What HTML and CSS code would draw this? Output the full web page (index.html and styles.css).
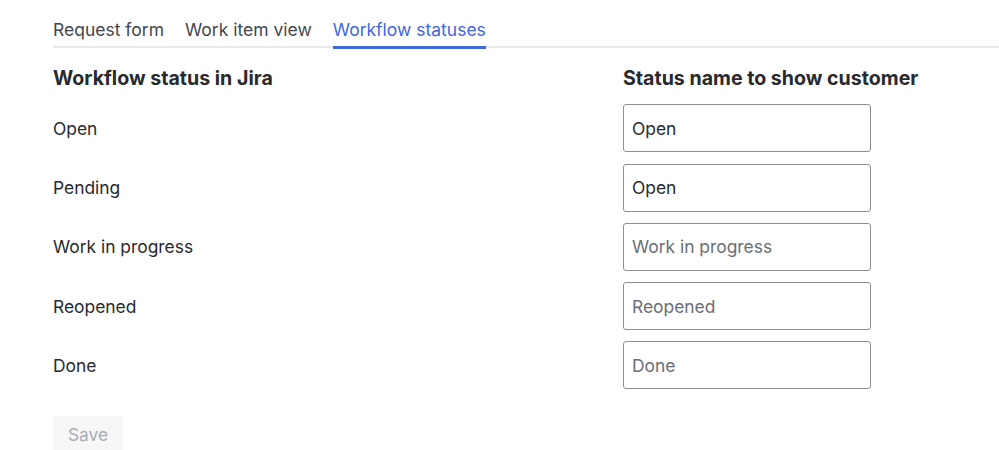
FILE: index.html
```html
<!DOCTYPE html>
<html>
<head>
<meta charset="utf-8">
<link rel="stylesheet" href="styles.css">
</head>
<body>
<div class="page">
  <nav class="tabs">
    <div class="tab">Request form</div>
    <div class="tab">Work item view</div>
    <div class="tab active">Workflow statuses</div>
  </nav>
  <div class="table">
    <div class="row head">
      <div class="col-left">Workflow status in Jira</div>
      <div class="col-right">Status name to show customer</div>
    </div>
    <div class="row">
      <div class="col-left">Open</div>
      <div class="col-right"><input class="field" value="Open"></div>
    </div>
    <div class="row">
      <div class="col-left">Pending</div>
      <div class="col-right"><input class="field" value="Open"></div>
    </div>
    <div class="row">
      <div class="col-left">Work in progress</div>
      <div class="col-right"><input class="field" placeholder="Work in progress"></div>
    </div>
    <div class="row">
      <div class="col-left">Reopened</div>
      <div class="col-right"><input class="field" placeholder="Reopened"></div>
    </div>
    <div class="row">
      <div class="col-left">Done</div>
      <div class="col-right"><input class="field" placeholder="Done"></div>
    </div>
  </div>
  <button class="save" disabled>Save</button>
</div>
</body>
</html>
```
FILE: styles.css
```css
* { box-sizing: border-box; }
html, body { margin: 0; padding: 0; background: #fff; overflow: hidden; }
body {
  font-family: Inter, "Noto Sans", sans-serif;
  color: #292a2e;
  font-size: 17.4px;
}
.page {
  padding: 16px 0 0 53px;
}
.tabs {
  display: flex;
  gap: 21px;
  border-bottom: 2px solid #e9e9eb;
  height: 32px;
}
.tab {
  font-size: 17.5px;
  line-height: 28px;
  color: #44464d;
  height: 32px;
}
.tab.active {
  color: #3f66dd;
  border-bottom: 3px solid #3f66dd;
  margin-bottom: -2px;
  height: 33px;
}
.table {
  padding-top: 15px;
  display: flex;
  flex-direction: column;
  gap: 11.25px;
}
.row {
  display: flex;
  align-items: center;
}
.row.head {
  font-weight: 700;
  font-size: 19.6px;
  line-height: 30px;
}
.col-left {
  width: 570px;
}
.col-right {
  flex: 1;
}
.field {
  display: block;
  width: 248px;
  height: 48px;
  border: 1px solid #8c8f97;
  border-radius: 3px;
  padding: 0 8px;
  font-family: Inter, "Noto Sans", sans-serif;
  font-size: 17.4px;
  color: #292a2e;
  background: #fff;
  outline: none;
}
.field::placeholder { color: #6b6e76; opacity: 1; }
.save {
  margin-top: 27px;
  width: 70px;
  height: 36px;
  border: none;
  border-radius: 3px;
  background: #f7f7f8;
  color: #a9abb0;
  font-family: Inter, "Noto Sans", sans-serif;
  font-size: 17.4px;
  padding: 0;
}
```
